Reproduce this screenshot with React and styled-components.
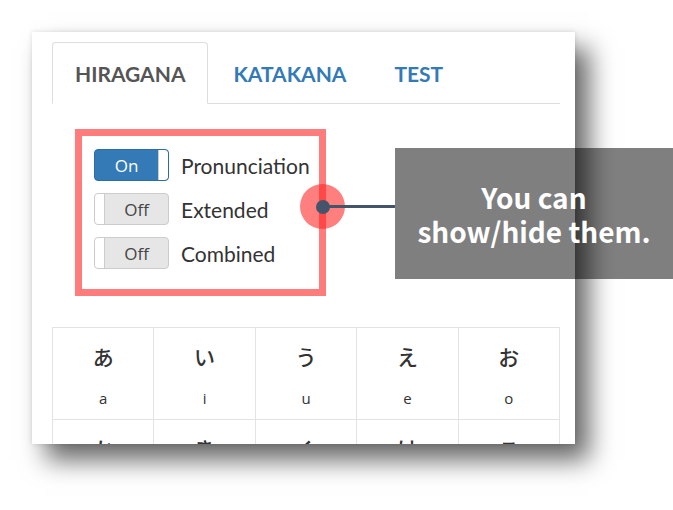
import styled, { createGlobalStyle } from "styled-components";

const GlobalStyle = createGlobalStyle`
  html, body {
    margin: 0;
    padding: 0;
    background: #ffffff;
    overflow: hidden;
  }
  body {
    font-family: Lato, "Noto Sans", sans-serif;
    color: #333;
  }
`;

const HIRAGANA = [
  ["あ", "a"],
  ["い", "i"],
  ["う", "u"],
  ["え", "e"],
  ["お", "o"],
  ["か", "ka"],
  ["き", "ki"],
  ["く", "ku"],
  ["け", "ke"],
  ["こ", "ko"],
];

const OPTIONS = [
  { label: "Pronunciation", on: true },
  { label: "Extended", on: false },
  { label: "Combined", on: false },
];

const App = () => {
  return (
    <Page>
      <GlobalStyle />
      <Card>
        <Tabs>
          <Tab active>HIRAGANA</Tab>
          <Tab>KATAKANA</Tab>
          <Tab>TEST</Tab>
        </Tabs>
        <Options>
          {OPTIONS.map((o) => (
            <OptionRow key={o.label}>
              <Switch on={o.on}>
                <SwitchLabel on={o.on}>{o.on ? "On" : "Off"}</SwitchLabel>
                <Handle on={o.on} />
              </Switch>
              <OptionText>{o.label}</OptionText>
            </OptionRow>
          ))}
        </Options>
        <Kana>
          {HIRAGANA.map(([k, r]) => (
            <Cell key={k}>
              <Glyph>{k}</Glyph>
              <Romaji>{r}</Romaji>
            </Cell>
          ))}
        </Kana>
      </Card>

      <Highlight />
      <Marker>
        <Dot />
      </Marker>
      <Connector />
      <Callout>
        You can
        <br />
        show/hide them.
      </Callout>
    </Page>
  );
};

const Page = styled.div`
  position: relative;
  width: 673px;
  height: 510px;
  padding: 32px 0 0 32px;
  box-sizing: border-box;
`;

const Card = styled.div`
  width: 543px;
  height: 412px;
  box-sizing: border-box;
  padding: 10px 15px 0 20px;
  background: #fff;
  overflow: hidden;
  box-shadow: 14px 16px 24px rgba(0, 0, 0, 0.6), 0 0 5px rgba(0, 0, 0, 0.12);
`;

const Tabs = styled.div`
  display: flex;
  border-bottom: 1px solid #ddd;
  height: 61px;
`;

const Tab = styled.div`
  display: flex;
  align-items: center;
  padding: 0 22px;
  margin-right: 2px;
  margin-bottom: -1px;
  font-size: 21px;
  font-weight: 700;
  color: ${(p) => (p.active ? "#555" : "#337ab7")};
  background: ${(p) => (p.active ? "#fff" : "transparent")};
  border: 1px solid ${(p) => (p.active ? "#ddd" : "transparent")};
  border-bottom-color: ${(p) => (p.active ? "#fff" : "transparent")};
  border-radius: 4px 4px 0 0;
`;

const Options = styled.div`
  display: flex;
  flex-direction: column;
  gap: 12px;
  margin: 45px 0 0 42px;
  height: 121px;
`;

const OptionRow = styled.div`
  display: flex;
  align-items: center;
  gap: 12px;
`;

const Switch = styled.div`
  width: 75px;
  height: 32px;
  box-sizing: border-box;
  border: 1px solid ${(p) => (p.on ? "#2e6da4" : "#ccc")};
  border-radius: 4px;
  background: ${(p) => (p.on ? "#337ab7" : "#e6e6e6")};
  display: flex;
  flex-direction: ${(p) => (p.on ? "row" : "row-reverse")};
  overflow: hidden;
`;

const SwitchLabel = styled.span`
  flex: 1;
  display: flex;
  align-items: center;
  justify-content: center;
  font-family: "Open Sans", "Noto Sans", sans-serif;
  font-size: 17px;
  color: ${(p) => (p.on ? "#fff" : "#444")};
`;

const Handle = styled.span`
  width: 9px;
  background: #fff;
  border-${(p) => (p.on ? "left" : "right")}: 1px solid #ccc;
  border-radius: ${(p) => (p.on ? "0 3px 3px 0" : "3px 0 0 3px")};
`;

const OptionText = styled.span`
  font-size: 21px;
  color: #333;
`;

const Kana = styled.div`
  margin-top: 57px;
  display: grid;
  grid-template-columns: repeat(5, 1fr);
  border-top: 1px solid #e3e3e3;
  border-left: 1px solid #e3e3e3;
`;

const Cell = styled.div`
  height: 92px;
  border-right: 1px solid #e3e3e3;
  border-bottom: 1px solid #e3e3e3;
  display: flex;
  flex-direction: column;
  align-items: center;
  padding-top: 13px;
  box-sizing: border-box;
`;

const Glyph = styled.span`
  font-family: "Noto Sans CJK JP", sans-serif;
  font-size: 21px;
  font-weight: 500;
  line-height: 30px;
  color: #333;
`;

const Romaji = styled.span`
  margin-top: 17px;
  font-family: "Open Sans", "Noto Sans", sans-serif;
  font-size: 15px;
  color: #333;
`;

const Highlight = styled.div`
  position: absolute;
  left: 75px;
  top: 129px;
  width: 251px;
  height: 167px;
  box-sizing: border-box;
  border: 7px solid #ff7c7c;
`;

const Marker = styled.div`
  position: absolute;
  left: 300px;
  top: 184px;
  width: 45px;
  height: 45px;
  border-radius: 50%;
  background: rgba(255, 40, 40, 0.6);
  display: flex;
  align-items: center;
  justify-content: center;
`;

const Dot = styled.div`
  width: 14px;
  height: 14px;
  border-radius: 50%;
  background: #44546a;
`;

const Connector = styled.div`
  position: absolute;
  left: 322px;
  top: 205px;
  width: 73px;
  height: 3px;
  background: #44546a;
`;

const Callout = styled.div`
  position: absolute;
  left: 395px;
  top: 148px;
  width: 278px;
  height: 131px;
  background: rgba(0, 0, 0, 0.5);
  display: flex;
  align-items: center;
  justify-content: center;
  text-align: center;
  font-family: "Noto Sans CJK KR", "Noto Sans", sans-serif;
  font-weight: 700;
  font-size: 28px;
  line-height: 34px;
  color: #fff;
`;

export default App;
